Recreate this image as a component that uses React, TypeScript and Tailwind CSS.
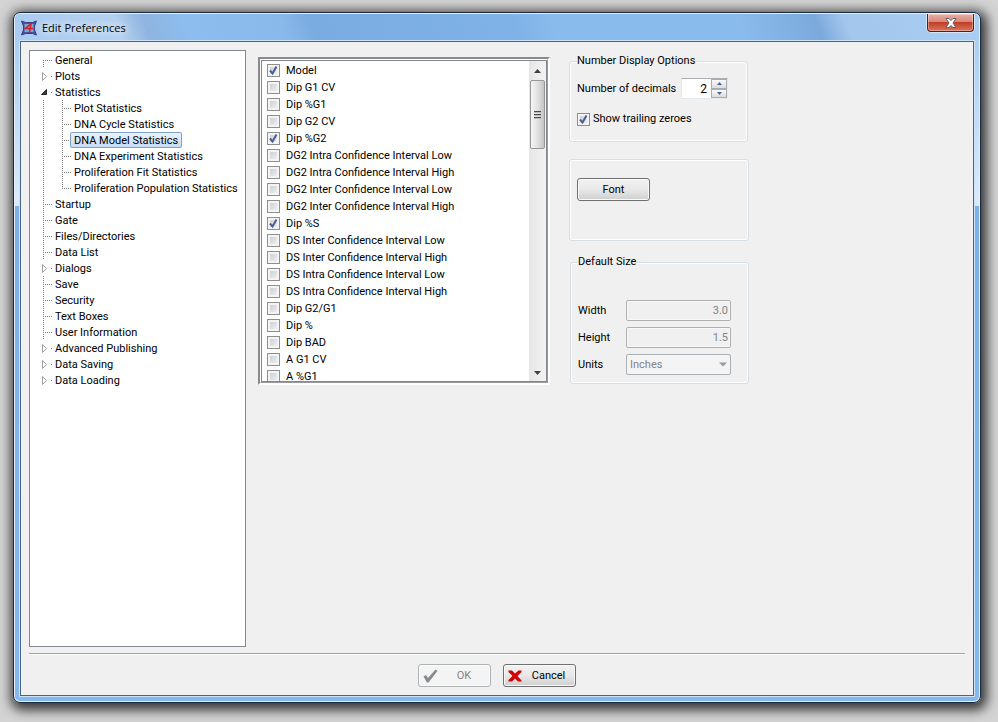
import { useState } from "react";
import type { ReactNode } from "react";

type Branch = "first" | "mid" | "last" | "closed" | "open";

interface TreeNode {
  label: string;
  branch: Branch;
  children?: TreeNode[];
}

const TREE: TreeNode[] = [
  { label: "General", branch: "first" },
  { label: "Plots", branch: "closed" },
  {
    label: "Statistics",
    branch: "open",
    children: [
      { label: "Plot Statistics", branch: "mid" },
      { label: "DNA Cycle Statistics", branch: "mid" },
      { label: "DNA Model Statistics", branch: "mid" },
      { label: "DNA Experiment Statistics", branch: "mid" },
      { label: "Proliferation Fit Statistics", branch: "mid" },
      { label: "Proliferation Population Statistics", branch: "last" },
    ],
  },
  { label: "Startup", branch: "mid" },
  { label: "Gate", branch: "mid" },
  { label: "Files/Directories", branch: "mid" },
  { label: "Data List", branch: "mid" },
  { label: "Dialogs", branch: "closed" },
  { label: "Save", branch: "mid" },
  { label: "Security", branch: "mid" },
  { label: "Text Boxes", branch: "mid" },
  { label: "User Information", branch: "mid" },
  { label: "Advanced Publishing", branch: "closed" },
  { label: "Data Saving", branch: "closed" },
  { label: "Data Loading", branch: "closed" },
];

const STATS = [
  "Model",
  "Dip G1 CV",
  "Dip %G1",
  "Dip G2 CV",
  "Dip %G2",
  "DG2 Intra Confidence Interval Low",
  "DG2 Intra Confidence Interval High",
  "DG2 Inter Confidence Interval Low",
  "DG2 Inter Confidence Interval High",
  "Dip %S",
  "DS Inter Confidence Interval Low",
  "DS Inter Confidence Interval High",
  "DS Intra Confidence Interval Low",
  "DS Intra Confidence Interval High",
  "Dip G2/G1",
  "Dip %",
  "Dip BAD",
  "A G1 CV",
  "A %G1",
];

export default function App() {
  const [selected, setSelected] = useState("DNA Model Statistics");
  const [decimals, setDecimals] = useState(2);

  return (
    <div className="min-h-screen flex bg-[#d4d4d4] pt-3 pb-[19px] pl-[13px] pr-[17px] font-['Roboto','Liberation_Sans',sans-serif] text-[11px] leading-4 text-black">
      <div className="flex-1 min-w-0 flex flex-col rounded-[7px] border border-[#1b2a3d] bg-[linear-gradient(to_bottom,#a3c9f0,#dcebfa_28%,#7db0e6_28%,#85b8ec)] px-1.5 pb-1.5 shadow-[inset_0_0_0_1px_#e3f0fc,2px_3px_12px_4px_rgba(0,0,0,0.75)]">
        <TitleBar />

        <main className="flex-1 flex flex-col border border-[#4a6584] bg-[#f0f0f0] px-2 pt-2 shadow-[0_0_0_1px_#cfe3f8]">
          <div className="flex-1 flex items-start">
            <nav className="self-stretch w-[217px] shrink-0 bg-white border border-[#828790] pt-px pl-0.5">
              <Tree nodes={TREE} selected={selected} onSelect={setSelected} />
            </nav>

            <StatList />

            <div className="mt-1 ml-[19px] w-[180px] flex flex-col">
              <Group title="Number Display Options" className="h-[88px] mr-px">
                <div className="flex items-center mt-[10px]">
                  <label htmlFor="decimals" className="w-[104px] whitespace-nowrap">Number of decimals</label>
                  <div className="flex w-[47px] h-[21px] bg-white border border-[#e3e9ef] border-t-[#abadb3]">
                    <input
                      id="decimals"
                      value={decimals}
                      onChange={(e) => setDecimals(Number(e.target.value) || 0)}
                      className="w-[28px] text-right pr-[3px] text-[12px] outline-none"
                    />
                    <div className="flex flex-col flex-1 ml-px">
                      <SpinButton up label="Increase" onClick={() => setDecimals(decimals + 1)} />
                      <SpinButton label="Decrease" onClick={() => setDecimals(Math.max(0, decimals - 1))} />
                    </div>
                  </div>
                </div>
                <label className="flex items-center gap-[3px] mt-3">
                  <Checkbox defaultChecked />
                  Show trailing zeroes
                </label>
              </Group>

              <div className="mt-[17px] h-[82px] rounded-[3px] border border-[#d5dfe5] shadow-[inset_0_0_0_1px_#fff] px-[7px] pt-[18px]">
                <button className="w-[73px] h-[23px] rounded-[3px] border border-[#707070] bg-linear-to-b from-[#f2f2f2] via-[#e8e8e8] via-50% to-[#cfcfcf] shadow-[inset_0_0_0_1px_#fafafa] pt-px">
                  Font
                </button>
              </div>

              <Group title="Default Size" className="h-[129px] mt-[14px] ml-px">
                <div className="mt-[31px] grid grid-cols-[48px_105px] gap-y-1.5 items-center">
                  <label htmlFor="width" className="pt-px">Width</label>
                  <SizeInput id="width" value="3.0" />
                  <label htmlFor="height" className="pt-px">Height</label>
                  <SizeInput id="height" value="1.5" />
                  <label htmlFor="units" className="pt-px">Units</label>
                  <div className="relative">
                    <select id="units" disabled className="block appearance-none w-full h-[21px] rounded-[2px] border border-[#abb0b5] bg-[#f4f4f4] pl-[3px] text-[11px] text-[#838383] opacity-100">
                      <option>Inches</option>
                    </select>
                    <svg className="absolute right-1 top-2 pointer-events-none" width="8" height="5" viewBox="0 0 8 5">
                      <path d="M0 0.5H8L4 4.5Z" fill="#9a9a9a" />
                    </svg>
                  </div>
                </div>
              </Group>
            </div>
          </div>

          <footer className="mt-1.5 border-t border-[#a0a0a0] shadow-[inset_0_1px_0_#fff] flex justify-center gap-3 pt-[10px] pb-2">
            <button disabled className="flex items-center w-[73px] h-[23px] rounded-[3px] border border-[#adb2b5] bg-[#f4f4f4] text-[#838383] shadow-[inset_0_0_0_1px_#fcfcfc]">
              <svg className="ml-1" width="15" height="14" viewBox="0 0 15 14">
                <path d="M0.5 7.5L3 6L5 9L12.5 0.5L14.5 2L5.5 13.5H4Z" fill="#8b8b8b" />
              </svg>
              <span className="flex-1 text-center pt-px">OK</span>
            </button>
            <button className="flex items-center w-[73px] h-[23px] rounded-[3px] border border-[#707070] bg-linear-to-b from-[#f2f2f2] via-[#e8e8e8] via-50% to-[#cfcfcf] shadow-[inset_0_0_0_1px_#fafafa]">
              <svg className="ml-1" width="14" height="12" viewBox="0 0 14 12">
                <path d="M0.5 0.5H4L7 3.5L10.5 0.5H13.5V2L9.5 6L13.5 10.5V11.5H10L7 8.5L4 11.5H0.5V10L4.5 6L0.5 2Z" fill="#d40000" />
              </svg>
              <span className="flex-1 text-center pt-px">Cancel</span>
            </button>
          </footer>
        </main>
      </div>
    </div>
  );
}

function TitleBar() {
  return (
    <header className="h-[27px] mt-px -mx-[5px] px-[5px] shrink-0 flex items-start justify-between rounded-t-[5px] bg-[linear-gradient(70deg,#a9cbf0,#b4d1f0_11%,#8fb4df_14%,#8cbdee_18%,#89b9eb_28%,#7aace1_31%,#7fb2e6_52%,#8abbed_56%,#8abbed_75%,#7ba9dc_83%,#a3c6ec_86%,#a9cdf3)]">
      <div className="flex items-center gap-[5px] h-[27px]">
        <AppIcon />
        <h1 className="font-['Open_Sans','Noto_Sans',sans-serif] text-[11px] [text-shadow:0_0_8px_white,0_0_8px_white]">Edit Preferences</h1>
      </div>
      <button aria-label="Close" className="w-[47px] h-[18px] rounded-b-[4px] border border-t-0 border-[#5a1a1a] bg-[linear-gradient(to_bottom,#e6b0a8,#d98375_48%,#c04026_50%,#d8745c)] shadow-[inset_0_0_0_1px_rgba(255,255,255,0.35),0_0_0_1px_rgba(255,255,255,0.5)] flex items-center justify-center">
        <svg width="12" height="10" viewBox="0 0 12 10">
          <path d="M1 0.5H4L6 2.5L8 0.5H11L8 5L11 9.5H8L6 7.5L4 9.5H1L4 5Z" fill="#fff" stroke="#5a5f70" />
        </svg>
      </button>
    </header>
  );
}

function AppIcon() {
  return (
    <svg className="ml-px" width="16" height="16" viewBox="0 0 16 16">
      <path d="M0.5 1L4.5 2.5H11.5L15.5 1L13.5 6V10L15.5 15L11.5 13.5H4.5L0.5 15L2.5 10V6Z" fill="#4a4fa8" stroke="#3d3780" />
      <rect x="3.5" y="4" width="9" height="8" fill="#6aaed8" />
      <path d="M10 3.5L4.5 8.5H12M10 3.5L8.5 12.5" fill="none" stroke="#d81f2c" strokeWidth="1.6" />
    </svg>
  );
}

function Tree({ nodes, selected, onSelect, nested = false }: { nodes: TreeNode[], selected: string, onSelect: (label: string) => void, nested?: boolean }) {
  return (
    <ul>
      {nodes.map((node) => (
        <li key={node.label}>
          <div className="flex h-4">
            {nested && <Connector branch="line" />}
            <Connector branch={node.branch} />
            <button
              onClick={() => onSelect(node.label)}
              className={
                node.label === selected
                  ? "px-[3px] pt-px leading-[14px] whitespace-nowrap rounded-[2px] border border-[#7da2ce] bg-linear-to-b from-[#eaf3fd] to-[#c6dcf8]"
                  : "px-1 pt-0.5 leading-[14px] whitespace-nowrap"
              }
            >
              {node.label}
            </button>
          </div>
          {node.children && <Tree nodes={node.children} selected={selected} onSelect={onSelect} nested />}
        </li>
      ))}
    </ul>
  );
}

function Connector({ branch }: { branch: Branch | "line" }) {
  const dots = { stroke: "#808080", strokeDasharray: "1 1" };
  return (
    <svg className="shrink-0 overflow-visible" width="19" height="16" viewBox="0 0 19 16">
      {branch === "first" && <path d="M11.5 8V16M11 8.5H20" {...dots} fill="none" />}
      {branch === "mid" && <path d="M11.5 0V16M11 8.5H20" {...dots} fill="none" />}
      {branch === "last" && <path d="M11.5 0V8M11 8.5H20" {...dots} fill="none" />}
      {branch === "line" && <path d="M11.5 0V16" {...dots} fill="none" />}
      {branch === "closed" && <path d="M10.5 4.5V12.5L14.5 8.5Z" fill="#fff" stroke="#a0a0a0" />}
      {branch === "open" && <path d="M14.5 5.5V10.5H9.5Z" fill="#404040" stroke="#262626" />}
      {(branch === "closed" || branch === "open") && <rect x="19" y="8" width="1" height="1" fill="#808080" />}
    </svg>
  );
}

function StatList() {
  return (
    <div className="mt-[7px] ml-3 w-[292px] h-[328px] shrink-0 border-2 border-t-[#8a8a8a] border-l-[#8a8a8a] border-b-white border-r-white">
      <div className="h-full border border-t-white border-l-white border-b-[#9a9a9e] border-r-[#9a9a9e]">
        <div className="flex h-full border border-[#828790] bg-white">
          <ul className="flex-1 overflow-hidden pl-[5px] pt-px leading-[10px]">
            {STATS.map((stat) => (
              <li key={stat}>
                <label className="flex items-center gap-1.5 h-[17px]">
                  <Checkbox defaultChecked={stat === "Model" || stat === "Dip %G2" || stat === "Dip %S"} />
                  {stat}
                </label>
              </li>
            ))}
          </ul>
          <ScrollBar />
        </div>
      </div>
    </div>
  );
}

function ScrollBar() {
  return (
    <div className="w-[17px] flex flex-col items-center bg-linear-to-r from-[#e6e6e6] to-[#f3f3f3]">
      <svg width="17" height="19" viewBox="0 0 17 19">
        <path d="M5 12L8.5 8L12 12Z" fill="#404040" />
      </svg>
      <div className="w-[15px] h-[69px] rounded-[2px] border border-[#979797] bg-linear-to-r from-[#f5f5f5] via-[#e2e2e2] via-50% to-[#c4c4c4] flex flex-col items-center justify-center gap-0.5">
        <span className="w-[7px] h-px bg-[#4a4a4a] shadow-[0_1px_0_#bbb]" />
        <span className="w-[7px] h-px bg-[#4a4a4a] shadow-[0_1px_0_#bbb]" />
        <span className="w-[7px] h-px bg-[#4a4a4a] shadow-[0_1px_0_#bbb]" />
      </div>
      <svg className="mt-auto" width="17" height="18" viewBox="0 0 17 18">
        <path d="M5 8L8.5 12L12 8Z" fill="#404040" />
      </svg>
    </div>
  );
}

function Checkbox({ defaultChecked = false }: { defaultChecked?: boolean }) {
  return (
    <span className="relative flex w-[13px] h-[13px] shrink-0">
      <input
        type="checkbox"
        defaultChecked={defaultChecked}
        className="peer appearance-none w-[13px] h-[13px] border border-[#8e8f8f] bg-linear-to-br from-[#c4c9d0] to-[#f6f6f6] shadow-[inset_0_0_0_2px_#f4f4f4]"
      />
      <svg className="absolute inset-0 hidden peer-checked:block pointer-events-none" width="13" height="13" viewBox="0 0 13 13">
        <path d="M3 6.5L5.5 9.5L9.5 2.5" fill="none" stroke="#4a5f97" strokeWidth="2" />
      </svg>
    </span>
  );
}

function Group({ title, className, children }: { title: string, className: string, children: ReactNode }) {
  return (
    <fieldset className={`rounded-[3px] border border-[#d5dfe5] shadow-[inset_0_0_0_1px_#fff] px-[7px] ${className}`}>
      <legend className="leading-[14px] bg-[#f0f0f0]">{title}</legend>
      {children}
    </fieldset>
  );
}

function SpinButton({ up = false, label, onClick }: { up?: boolean, label: string, onClick: () => void }) {
  return (
    <button aria-label={label} onClick={onClick} className="flex-1 flex items-center justify-center border border-[#a9adb3] bg-linear-to-b from-[#fafafa] to-[#dcdcdc]">
      <svg width="5" height="3" viewBox="0 0 5 3">
        <path d={up ? "M0 3L2.5 0L5 3Z" : "M0 0L2.5 3L5 0Z"} fill="#4a62a8" />
      </svg>
    </button>
  );
}

function SizeInput({ id, value }: { id: string, value: string }) {
  return (
    <input
      id={id}
      disabled
      defaultValue={value}
      className="w-full h-[21px] rounded-[2px] border border-[#afafaf] bg-[#f0f0f0] pr-0.5 text-right text-[11px] text-[#838383] shadow-[inset_0_0_0_1px_#f8f8f8]"
    />
  );
}
